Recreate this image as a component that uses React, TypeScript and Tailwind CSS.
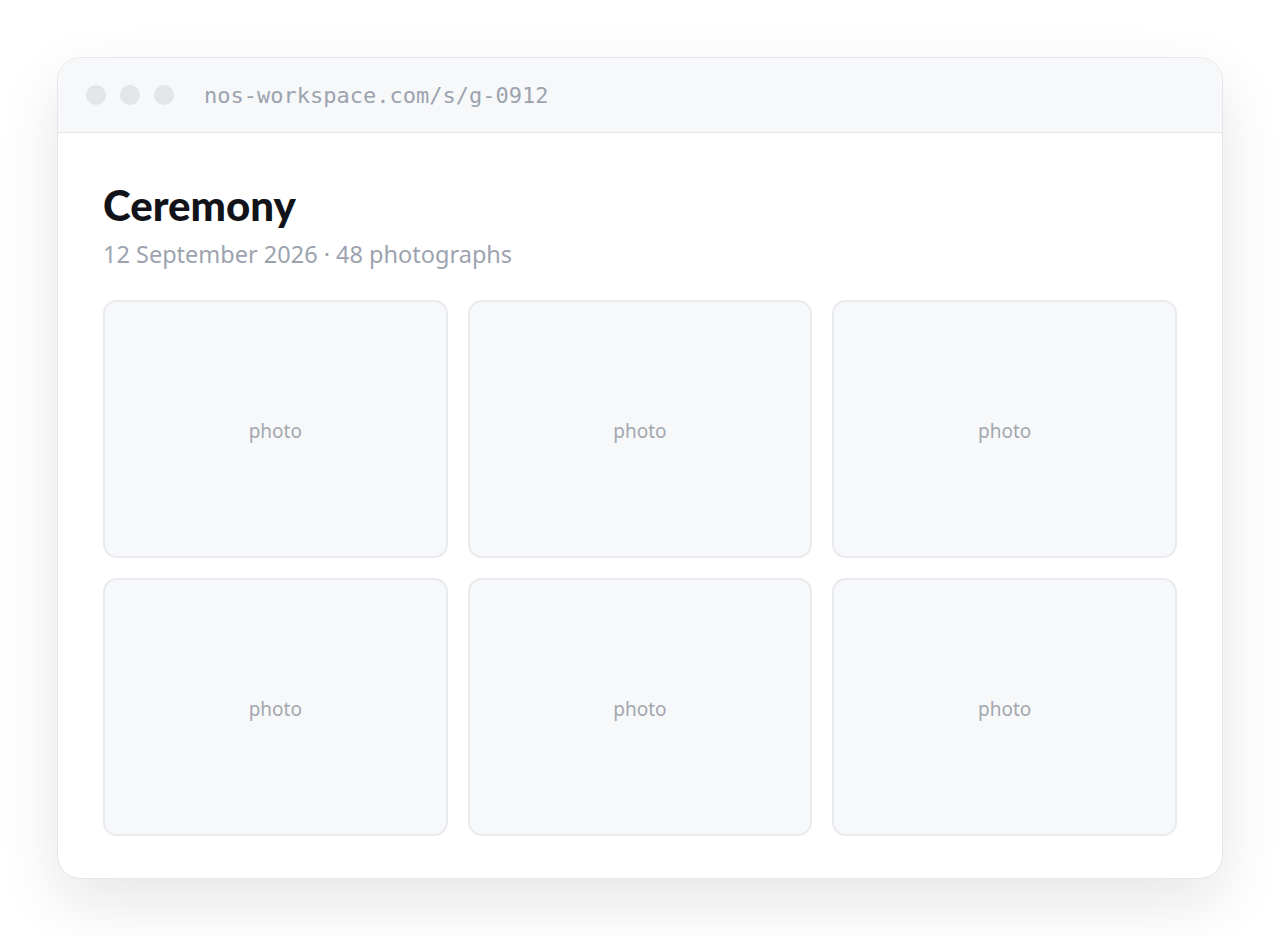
const PHOTOS = Array.from({ length: 6 }, (_, i) => i);

export default function App() {
  return (
    <div className="min-h-[936px] bg-white p-[57px] pb-[58px]" style={{ fontFamily: '"Noto Sans", "Open Sans", sans-serif' }}>
      <div className="overflow-hidden rounded-[24px] border border-[#e5e7eb] bg-white shadow-[0_24px_60px_rgba(15,23,42,0.10)]">
        <div className="flex h-[75px] items-center gap-[14px] border-b border-[#e5e7eb] bg-[#f7f8fa] px-[28px]">
          <span className="h-[20px] w-[20px] rounded-full bg-[#e3e5e8]" />
          <span className="h-[20px] w-[20px] rounded-full bg-[#e3e5e8]" />
          <span className="h-[20px] w-[20px] rounded-full bg-[#e3e5e8]" />
          <span
            className="ml-[16px] text-[22px] text-[#9ca3af]"
            style={{ fontFamily: '"DejaVu Sans Mono", "Liberation Mono", monospace' }}
          >
            nos-workspace.com/s/g-0912
          </span>
        </div>

        <div className="px-[45px] pb-[42px] pt-[48px]">
          <h1 className="text-[42px] font-black leading-[48px] text-[#111318]" style={{ fontFamily: 'Lato, "Noto Sans", sans-serif' }}>
            Ceremony
          </h1>
          <p className="mt-[10px] text-[23.5px] leading-[30px] text-[#9ca3af]">12 September 2026 · 48 photographs</p>

          <div className="mt-[31px] grid grid-cols-3 gap-5">
            {PHOTOS.map((i) => (
              <div
                key={i}
                className="flex h-[258px] items-center justify-center rounded-[14px] border-2 border-[#e8eaed] bg-[#f7f8fa] pt-[5px] text-[19px] text-[#a3a7ae]"
              >
                photo
              </div>
            ))}
          </div>
        </div>
      </div>
    </div>
  );
}
